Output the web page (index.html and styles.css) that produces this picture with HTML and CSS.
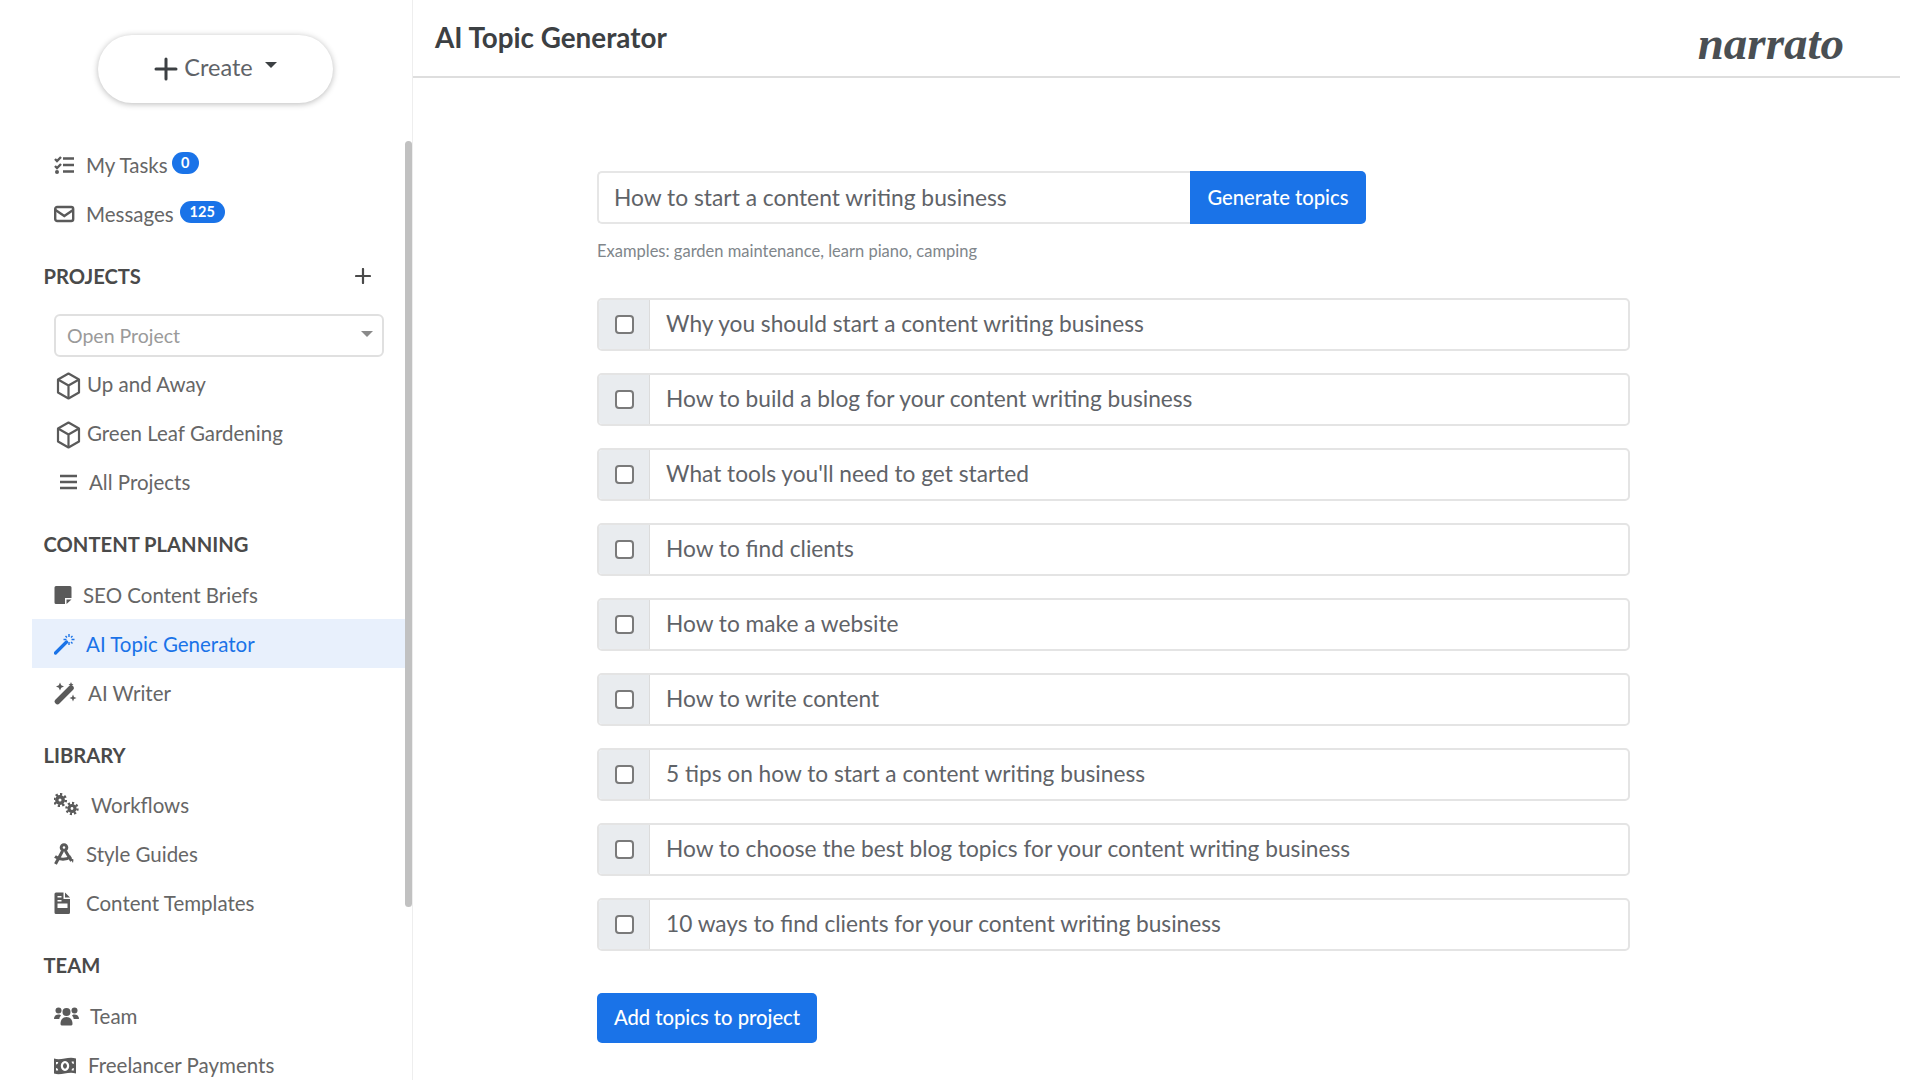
FILE: index.html
```html
<!DOCTYPE html>
<html lang="en">
<head>
<meta charset="utf-8">
<title>AI Topic Generator</title>
<link rel="stylesheet" href="styles.css">
</head>
<body>
<div class="app">
  <aside class="sidebar">
    <div class="scrollbar"></div>
    <button class="create"><svg class="ico" width="24" height="24" viewBox="0 0 24 24"><path d="M12 2v20M2 12h20" stroke="#3c4043" stroke-width="3" stroke-linecap="round"/></svg><span>Create</span><i class="caret"></i></button>

    <nav class="group first">
      <a class="row"><svg class="ico" width="32" height="24" viewBox="0 0 32 24"><g fill="none" stroke="#5a5a5a" stroke-width="2.400"><path d="M1 6l2 2 4-4M1 13l2 2 4-4" /><path d="M9 5.500h11M9 12h11M9 18.500h11"/></g><circle cx="3" cy="19" r="2" fill="#5a5a5a"/></svg><span>My Tasks</span><b class="badge b1">0</b></a>
      <a class="row"><svg class="ico" width="32" height="24" viewBox="0 0 32 24"><g fill="none" stroke="#5a5a5a" stroke-width="2.400"><rect x="1.200" y="5" width="18" height="14" rx="2"/><path d="M1.500 8l8.800 6 8.800-6"/></g></svg><span>Messages</span><b class="badge b2">125</b></a>
    </nav>

    <section class="group">
      <h3 class="head"><span>PROJECTS</span><svg width="16" height="16" viewBox="0 0 16 16"><path d="M8 1v14M1 8h14" stroke="#4a4a4a" stroke-width="2.200" stroke-linecap="round"/></svg></h3>
      <div class="select"><span>Open Project</span><i class="caret small"></i></div>
      <a class="row"><svg class="ico cube" width="33" height="28" viewBox="0 0 33 28"><g fill="none" stroke="#5a5a5a" stroke-width="2.200" stroke-linejoin="round"><path d="M14.500 1.500l10.500 6v13l-10.500 6-10.500-6v-13z"/><path d="M4 7.500l10.500 6 10.500-6M14.500 13.500v13"/></g></svg><span>Up and Away</span></a>
      <a class="row"><svg class="ico cube" width="33" height="28" viewBox="0 0 33 28"><g fill="none" stroke="#5a5a5a" stroke-width="2.200" stroke-linejoin="round"><path d="M14.500 1.500l10.500 6v13l-10.500 6-10.500-6v-13z"/><path d="M4 7.500l10.500 6 10.500-6M14.500 13.500v13"/></g></svg><span>Green Leaf Gardening</span></a>
      <a class="row"><svg class="ico" width="35" height="24" viewBox="0 0 35 24"><path d="M6 6h17M6 12h17M6 18h17" stroke="#5a5a5a" stroke-width="2.400"/></svg><span>All Projects</span></a>
    </section>

    <section class="group">
      <h3 class="head"><span>CONTENT PLANNING</span></h3>
      <a class="row"><svg class="ico" width="29" height="24" viewBox="0 0 29 24"><path d="M2 3h14a1.500 1.500 0 0 1 1.500 1.500V15H11v6H2A1.500 1.500 0 0 1 .500 19.500v-15A1.500 1.500 0 0 1 2 3zM12.500 21v-4.500h5z" fill="#5a5a5a"/></svg><span>SEO Content Briefs</span></a>
      <a class="row active"><svg class="ico" width="32" height="24" viewBox="0 0 32 24"><path d="M1.500 21l11-11" stroke="#1a73e8" stroke-width="3.200" stroke-linecap="round"/><path d="M15 2v3M15 10v3M9.500 7.500h3M17.500 7.500h3M11.500 4l1.500 1.500M17 10l1.500 1.500M18.500 4L17 5.500" stroke="#1a73e8" stroke-width="1.400"/></svg><span>AI Topic Generator</span></a>
      <a class="row"><svg class="ico" width="34" height="24" viewBox="0 0 34 24"><path d="M3.500 20.500L17 7" stroke="#5a5a5a" stroke-width="5.500" stroke-linecap="round"/><path d="M6 1.500l1.200 2.800 2.800 1.200-2.800 1.200L6 9.500 4.800 6.700 2 5.500l2.800-1.200zM19 13.500l1 2.500 2.500 1-2.500 1-1 2.500-1-2.500-2.500-1 2.500-1zM17 1l.7 1.800 1.800.7-1.800.7L17 6l-.7-1.800-1.800-.7 1.800-.7z" fill="#5a5a5a"/></svg><span>AI Writer</span></a>
    </section>

    <section class="group">
      <h3 class="head"><span>LIBRARY</span></h3>
      <a class="row"><svg class="ico" width="37" height="24" viewBox="0 0 37 24"><g fill="none" stroke="#5a5a5a"><circle cx="6" cy="7" r="3.200" stroke-width="3.400"/><circle cx="6" cy="7" r="5.800" stroke-width="2.600" pathLength="16" stroke-dasharray="1 1"/><circle cx="18" cy="15.500" r="3" stroke-width="3.200"/><circle cx="18" cy="15.500" r="5.500" stroke-width="2.400" pathLength="16" stroke-dasharray="1 1"/></g></svg><span>Workflows</span></a>
      <a class="row"><svg class="ico" width="32" height="24" viewBox="0 0 32 24"><g fill="none" stroke="#5a5a5a" stroke-width="3"><circle cx="10" cy="5.500" r="2.800"/><path d="M8.500 9L1.500 22M11.500 9l6 10M1 14.500c5 3.500 11 3.500 16 0"/></g><path d="M16 16l3.500 1.500-.5 3.500z" fill="#5a5a5a"/></svg><span>Style Guides</span></a>
      <a class="row"><svg class="ico" width="32" height="24" viewBox="0 0 32 24"><path fill-rule="evenodd" d="M2 1.500h7.500V8H16v13.500a1.500 1.500 0 0 1-1.500 1.500h-12.500A1.500 1.500 0 0 1 .500 21.500V3A1.500 1.500 0 0 1 2 1.500zM11 1.500L16 6.500h-5zM3.500 5v1.500h4V5zM3.500 9v1.500h4V9zM3.500 12.500V17h10v-4.500z" fill="#5a5a5a"/></svg><span>Content Templates</span></a>
    </section>

    <section class="group">
      <h3 class="head"><span>TEAM</span></h3>
      <a class="row"><svg class="ico" width="36" height="24" viewBox="0 0 36 24"><g fill="#5a5a5a"><circle cx="4.500" cy="6.500" r="3"/><circle cx="20.500" cy="6.500" r="3"/><circle cx="12.500" cy="8" r="4"/><path d="M0 15c0-3 2-4.500 4.500-4.500 1.500 0 2 .5 2.500 1-1 1-1.500 2-1.700 3.500zM25 15c0-3-2-4.500-4.500-4.500-1.500 0-2 .5-2.500 1 1 1 1.500 2 1.700 3.500zM6.500 20c0-4 2-7 6-7s6 3 6 7c0 1-1 1.500-2 1.500h-8c-1 0-2-.5-2-1.500z"/></g></svg><span>Team</span></a>
      <a class="row"><svg class="ico" width="34" height="24" viewBox="0 0 34 24"><path fill-rule="evenodd" fill="#5a5a5a" d="M0 5.500c7 2.500 14-2.500 22 0v15c-8-2.500-15 2.500-22 0zM11 8a4.200 5 0 1 0 .01 0zM11 10.300a2 2.700 0 1 1-.01 0zM2 9v2.500c1.300 0 2.200-1 2.200-2.500zM19.800 15c-1.300 0-2.200 1-2.200 2.500h2.200zM2 15v2.500h2.200C4.200 16 3.300 15 2 15zM19.800 8.500h-2.200c0 1.500.9 2.500 2.200 2.500z"/></svg><span>Freelancer Payments</span></a>
    </section>
  </aside>

  <main class="main">
    <header class="topbar">
      <h1 class="title">AI Topic Generator</h1>
      <div class="logo">narrato</div>
    </header>
    <div class="content">
      <div class="search">
        <div class="field">How to start a content writing business</div>
        <button class="btn gen">Generate topics</button>
      </div>
      <p class="hint">Examples: garden maintenance, learn piano, camping</p>
      <div class="topics">
        <label class="topic"><span class="check"><input type="checkbox"></span><span class="text">Why you should start a content writing business</span></label>
        <label class="topic"><span class="check"><input type="checkbox"></span><span class="text">How to build a blog for your content writing business</span></label>
        <label class="topic"><span class="check"><input type="checkbox"></span><span class="text">What tools you'll need to get started</span></label>
        <label class="topic"><span class="check"><input type="checkbox"></span><span class="text">How to find clients</span></label>
        <label class="topic"><span class="check"><input type="checkbox"></span><span class="text">How to make a website</span></label>
        <label class="topic"><span class="check"><input type="checkbox"></span><span class="text">How to write content</span></label>
        <label class="topic"><span class="check"><input type="checkbox"></span><span class="text">5 tips on how to start a content writing business</span></label>
        <label class="topic"><span class="check"><input type="checkbox"></span><span class="text">How to choose the best blog topics for your content writing business</span></label>
        <label class="topic"><span class="check"><input type="checkbox"></span><span class="text">10 ways to find clients for your content writing business</span></label>
      </div>
      <button class="btn add">Add topics to project</button>
    </div>
  </main>
</div>
</body>
</html>
```

FILE: styles.css
```css
* { box-sizing: border-box; }
html, body { margin: 0; height: 100%; overflow: hidden; background: #fff; }
body { font-family: Lato, "Noto Sans", sans-serif; color: #5f6368; }
.app { display: flex; height: 1080px; }

.sidebar { position: relative; width: 413px; flex: none; border-right: 1px solid #eee; padding-top: 35px; overflow: hidden; }
.scrollbar { position: absolute; left: 405px; top: 141px; width: 7px; height: 766px; border-radius: 4px; background: #c1c1c1; }

.create { display: flex; align-items: center; justify-content: center; gap: 6px; width: 235px; height: 68px; margin-left: 98px; padding: 0 0 4px 4px; border: 0; border-radius: 34px; background: #fff; box-shadow: 0 1px 6px rgba(0,0,0,.28); font: 400 23.500px Lato, sans-serif; color: #5f6368; }
.create .ico { margin: 4px 0 0 -4px; }
.caret { width: 0; height: 0; margin: -4px 0 0 6px; border: 6.500px solid transparent; border-top-color: #3c4043; border-bottom: 0; }

.group { margin-top: 22.500px; }
.group.first { margin-top: 37px; }
.head { display: flex; justify-content: space-between; align-items: center; height: 30px; margin: 0 0 11px; padding: 0 34px 0 43.500px; width: 405px; font-size: 20.200px; font-weight: 700; color: #4a4a4a; }
.row { display: flex; align-items: center; height: 49px; width: 405px; padding-left: 54px; font-size: 20.500px; color: #666; }
.row.active { width: 373px; margin-left: 32px; padding-left: 22px; background: #e8f0fc; color: #1a73e8; }
.ico { flex: none; }
.cube { margin-top: 4px; }
.badge { align-self: flex-start; height: 22px; margin: 12px 0 0 4px; border-radius: 11px; background: #1a73e8; color: #fff; font-size: 14.500px; font-weight: 700; line-height: 22px; text-align: center; }
.b1 { width: 27px; }
.b2 { width: 45px; margin-left: 6px; }

.select { display: flex; justify-content: space-between; align-items: center; width: 330px; height: 43px; margin: 23px 0 3px 54px; padding: 0 11px; border: 2px solid #e0e0e0; border-radius: 6px; font-size: 19.500px; color: #9a9a9a; }
.caret.small { border-width: 6px; border-bottom: 0; border-top-color: #8a8a8a; margin: -3px -2px 0 0; }

.main { flex: 1; padding-right: 20px; }
.topbar { display: flex; justify-content: space-between; align-items: center; height: 78px; border-bottom: 2px solid #dedede; padding: 0 56px 0 22px; }
.title { margin: -2px 0 0; font-size: 27.800px; font-weight: 700; color: #3c4043; }
.logo { font-family: "Liberation Serif", serif; font-style: italic; font-weight: 700; font-size: 47px; line-height: 1; color: #4a4f53; margin-top: 10px; }

.content { padding: 93px 0 0 184px; }
.search { display: flex; width: 769px; height: 53px; }
.field { display: flex; align-items: center; flex: 1; padding: 0 0 2px 15px; border: 2px solid #e6e6e6; border-right: 0; border-radius: 5px 0 0 5px; font-size: 22.800px; color: #5f6368; }
.btn { border: 0; padding: 0 0 2px; background: #1a73e8; color: #fff; font: 500 20.200px Lato, sans-serif; }
.gen { width: 176px; border-radius: 0 5px 5px 0; }
.hint { margin: 16px 0 0; font-size: 16.500px; line-height: 22px; color: #80868b; }
.topics { display: flex; flex-direction: column; gap: 22px; width: 1033px; margin-top: 35.500px; }
.topic { display: flex; height: 53px; border: 2px solid #e4e4e4; border-radius: 5px; overflow: hidden; }
.check { display: flex; align-items: center; justify-content: center; width: 51px; flex: none; background: #e9ecef; border-right: 1px solid #dcdcdc; }
.check input { appearance: none; width: 19px; height: 19px; margin: 0; border: 2px solid #7a7a7a; border-radius: 4px; background: #fff; }
.text { display: flex; align-items: center; padding: 0 0 2px 16px; font-size: 22.700px; color: #5f6368; }
.add { display: block; width: 220px; height: 50px; margin-top: 42px; border-radius: 5px; }
```
